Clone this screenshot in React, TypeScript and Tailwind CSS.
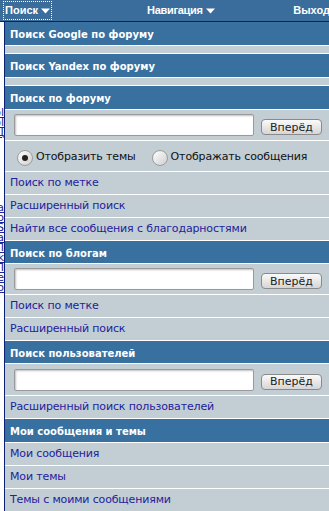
import React from "react";

const DEJAVU = '"DejaVu Sans", Verdana, sans-serif';
const ROW =
  "h-[22px] flex items-center bg-[#c2cdd4] pl-[5px] text-[11px] tracking-[-0.15px] text-[#22229c] whitespace-nowrap";

function Caret() {
  return (
    <svg width="9" height="6" viewBox="0 0 9 6" className="ml-[3px]">
      <path d="M0 0.5h9L4.5 5.5z" fill="#fff" />
    </svg>
  );
}

function Header({ children, h = "h-[23px]" }: { children: React.ReactNode; h?: string }) {
  return (
    <div className={`${h} pt-[2px] flex items-center bg-[#3870a0] pl-[5px] text-[10px] font-bold text-white whitespace-nowrap`}>
      {children}
    </div>
  );
}

function Link({ children }: { children: React.ReactNode }) {
  return <div className={ROW}>{children}</div>;
}

function SearchBox({ h = "h-[30px]" }: { h?: string }) {
  return (
    <div className={`${h} flex items-center bg-[#c2cdd4] pl-[9px]`}>
      <div className="w-[240px] h-[22px] bg-white border border-[#9a9a9a] rounded-[2px] shadow-[inset_1px_1px_2px_rgba(0,0,0,0.25)]" />
      <button className="ml-[7px] mt-[4px] w-[61px] h-[16px] flex items-center justify-center rounded-[4px] border border-[#8a8a8a] bg-gradient-to-b from-[#fafafa] to-[#d6d6d6] text-[11px] text-[#222] leading-none">
        Вперёд
      </button>
    </div>
  );
}

function Radio({ checked }: { checked?: boolean }) {
  return (
    <div className="w-[16px] h-[16px] rounded-full border border-[#9c9c9c] bg-gradient-to-br from-[#ffffff] to-[#cfcfcf] flex items-center justify-center shrink-0">
      {checked && <div className="w-[6px] h-[6px] rounded-full bg-[#222]" />}
    </div>
  );
}

const SCRAPS_A = ["ol", "ol", "Ц"];
const SCRAPS_B = ["a", "o", "S", "a", "П", "k", "П", "e", "o"];

export default function App() {
  return (
    <div className="w-[329px] h-[511px] overflow-hidden bg-white" style={{ fontFamily: DEJAVU }}>
      {/* nav bar */}
      <div
        className="h-[22px] bg-[#3a6d9c] border-b border-[#0b1f73] flex items-center text-[11px] font-bold text-white whitespace-nowrap"
        style={{ fontFamily: '"Liberation Sans", Arial, sans-serif' }}
      >
        <div className="ml-[3px] h-[19px] px-[1px] flex items-center border border-dotted border-white">
          Поиск
          <Caret />
        </div>
        <div className="ml-[95px] flex items-center tracking-[-0.3px]">
          Навигация
          <Caret />
        </div>
        <div className="ml-auto mr-[-1px]">Выход</div>
      </div>

      <div className="flex">
        {/* underlying page peeking out */}
        <div className="w-[4px] shrink-0 bg-white text-[11px] text-[#22229c] underline">
          <div className="mt-[86px] flex flex-col">
            {SCRAPS_A.map((s, i) => (
              <div key={i} className="h-[10px] flex justify-end overflow-hidden whitespace-nowrap leading-[10px]">
                {s}
              </div>
            ))}
          </div>
          <div className="mt-[65px] flex flex-col">
            {SCRAPS_B.map((s, i) => (
              <div key={i} className="h-[10px] flex justify-end overflow-hidden whitespace-nowrap leading-[10px]">
                {s}
              </div>
            ))}
          </div>
        </div>

        {/* popup menu */}
        <div className="flex-1 border-l border-[#0b1f73] bg-white flex flex-col gap-px">
          <Header>Поиск Google по форуму</Header>
          <div className="h-[7px] bg-[#c2cdd4]" />
          <Header>Поиск Yandex по форуму</Header>
          <div className="h-[7px] bg-[#c2cdd4]" />
          <Header>Поиск по форуму</Header>
          <SearchBox />
          <div className="h-[30px] pt-[3px] flex items-center bg-[#c2cdd4] pl-[12px] text-[11px] tracking-[-0.15px] text-[#111] whitespace-nowrap">
            <Radio checked />
            <span className="ml-[3px]">Отобразить темы</span>
            <span className="ml-[16px]">
              <Radio />
            </span>
            <span className="ml-[3px]">Отображать сообщения</span>
          </div>
          <Link>Поиск по метке</Link>
          <Link>Расширенный поиск</Link>
          <Link>Найти все сообщения с благодарностями</Link>
          <Header h="h-[22px]">Поиск по блогам</Header>
          <SearchBox />
          <Link>Поиск по метке</Link>
          <Link>Расширенный поиск</Link>
          <Header h="h-[22px]">Поиск пользователей</Header>
          <SearchBox h="h-[31px]" />
          <Link>Расширенный поиск пользователей</Link>
          <Header>Мои сообщения и темы</Header>
          <Link>Мои сообщения</Link>
          <Link>Мои темы</Link>
          <Link>Темы с моими сообщениями</Link>
        </div>
      </div>
    </div>
  );
}
